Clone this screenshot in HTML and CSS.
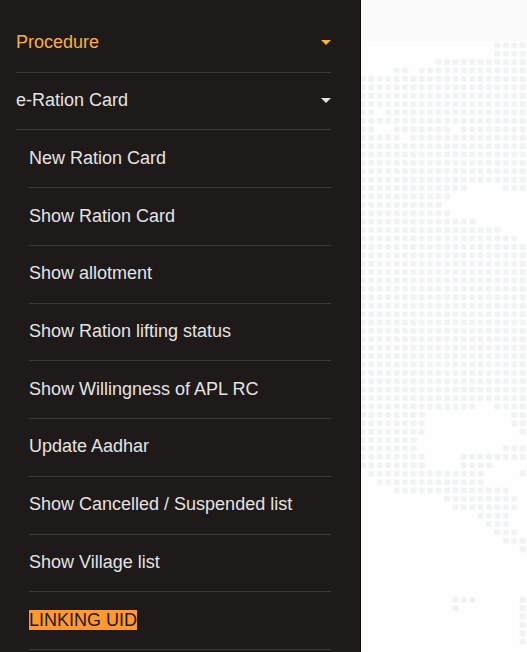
FILE: index.html
```html
<!DOCTYPE html>
<html lang="en">
<head>
<meta charset="utf-8">
<meta name="viewport" content="width=device-width, initial-scale=1">
<title>Ration Card Services</title>
<link rel="stylesheet" href="styles.css">
</head>
<body>
<div class="page">
  <nav class="sidebar" aria-label="Main menu">
    <ul class="menu">
      <li class="group">
        <button class="row active" type="button">Procedure
          <svg class="caret" viewBox="0 0 10 5" aria-hidden="true"><path d="M0 0H10L5 5Z"/></svg>
        </button>
      </li>
      <li class="group">
        <button class="row" type="button" aria-expanded="true">e-Ration Card
          <svg class="caret" viewBox="0 0 10 5" aria-hidden="true"><path d="M0 0H10L5 5Z"/></svg>
        </button>
        <ul class="submenu">
          <li><a class="row" href="#">New Ration Card</a></li>
          <li><a class="row" href="#">Show Ration Card</a></li>
          <li><a class="row" href="#">Show allotment</a></li>
          <li><a class="row" href="#">Show Ration lifting status</a></li>
          <li><a class="row" href="#">Show Willingness of APL RC</a></li>
          <li><a class="row" href="#">Update Aadhar</a></li>
          <li><a class="row" href="#">Show Cancelled / Suspended list</a></li>
          <li><a class="row" href="#">Show Village list</a></li>
          <li><a class="row" href="#"><mark>LINKING UID</mark></a></li>
        </ul>
      </li>
    </ul>
  </nav>
  <main class="content">
    <div class="band"></div>
    <svg class="map" width="166" height="611" aria-hidden="true">
      <defs>
        <pattern id="dots" width="1" height="1" patternUnits="userSpaceOnUse">
          <rect x=".1" y=".1" width=".8" height=".8" rx=".24" fill="#f7f8f9"/>
          <rect x=".2" y=".2" width=".6" height=".6" rx=".14" fill="#f0f2f3"/>
        </pattern>
      </defs>
      <!-- One unit is one dot cell -->
      <g transform="translate(-2.2 0.1) scale(8.4)">
        <path fill="url(#dots)" d="M16 0h4v2h-4z M9 2h11v1H9z M4 3h2v1H4z M7 3h13v1H7z M0 4h20v4H0z M0 8h2v1H0z M3 8h17v1H3z M0 9h20v1H0z M0 10h2v1H0z M4 10h7v1H4z M12 10h8v1h-8z M0 11h5v1H0z M6 11h14v1H6z M0 12h20v5H0z M0 17h13v1H0z M17 17h3v1h-3z M0 18h11v1H0z M0 19h10v1H0z M0 20h11v1H0z M0 21h14v1H0z M0 22h17v1H0z M0 23h19v1H0z M0 24h20v19H0z M0 43h14v1H0z M16 43h4v1h-4z M0 44h8v3H0z M18 44h2v2h-2z M19 46h1v1h-1z M0 47h7v2H0z M17 48h3v1h-3z M0 49h8v2H0z M12 49h8v1h-8z M12 50h4v1h-4z M1 51h14v1H1z M19 51h1v1h-1z M2 52h13v1H2z M4 53h14v1H4z M10 54h9v1h-9z M11 55h8v1h-8z M14 56h4v1h-4z M15 57h3v1h-3z M16 58h3v1h-3z M17 59h3v1h-3z M19 60h1v1h-1z M11 66h3v1h-3z M11 67h1v1h-1z M19 66h1v6h-1z"/>
      </g>
    </svg>
  </main>
</div>
</body>
</html>
```
FILE: styles.css
```css
* {
  box-sizing: border-box;
}

body {
  margin: 0;
  background: #fefefe;
  font-family: "Liberation Sans", Arial, sans-serif;
  font-size: 18px;
  line-height: 20px;
}

.page {
  display: flex;
  height: 100vh;
  min-height: 480px;
  overflow: hidden;
}

.sidebar {
  flex: 0 0 68.5%;
  padding: 15px 29px 2px 16px;
  background: #1e1a19;
  border-right: 1px solid #0c0907;
}

.menu {
  display: grid;
  grid-template-rows: repeat(11, 1fr);
  height: 100%;
  margin: 0;
  padding: 0;
  list-style: none;
}

.group,
.submenu {
  display: contents;
  list-style: none;
}

.submenu li {
  display: grid;
  margin-left: 13px;
}

.row {
  display: flex;
  align-items: center;
  justify-content: space-between;
  width: 100%;
  padding: 0 0 2px;
  border: 0;
  border-bottom: 1px solid #3b3837;
  background: none;
  color: #e4e3e3;
  font: inherit;
  text-align: left;
  text-decoration: none;
}

.active {
  color: #fbb03b;
}

.caret {
  width: 10px;
  height: 5px;
  fill: currentColor;
}

mark {
  background: #ff982f;
  color: #1e1a19;
}

.content {
  flex: 1;
  min-width: 0;
}

.band {
  height: 41px;
  margin-left: 2px;
  background: #fafafa;
}

.map {
  display: block;
}
```
